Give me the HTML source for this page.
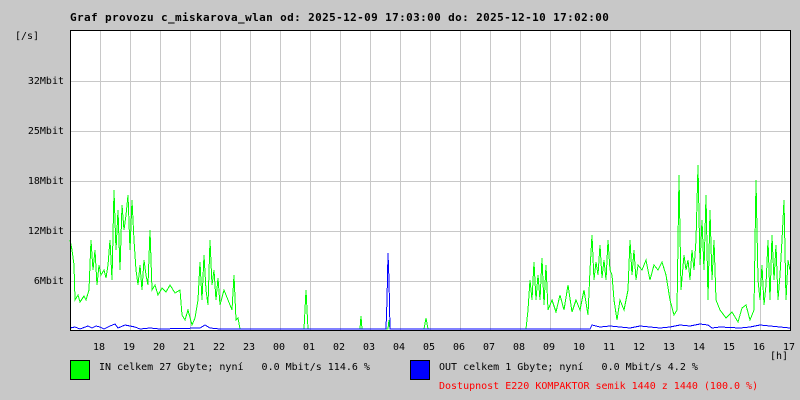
<!DOCTYPE html>
<html><head><meta charset="utf-8"><style>
body{margin:0;background:#c8c8c8;width:800px;height:400px;overflow:hidden;font-family:"DejaVu Sans Mono","Liberation Mono",monospace;font-size:10px}
.t{position:absolute;white-space:pre;color:#000;line-height:12px}
.h{position:absolute;top:342px;width:20px;text-align:center;line-height:12px}
</style></head><body>
<svg width="800" height="400" style="position:absolute;left:0;top:0" shape-rendering="crispEdges">
<rect x="70" y="30" width="720" height="300" fill="#fff"/>
<g stroke="#c8c8c8" stroke-width="1">
<path d="M100.5 30V330M130.5 30V330M160.5 30V330M190.5 30V330M220.5 30V330M250.5 30V330M280.5 30V330M310.5 30V330M340.5 30V330M370.5 30V330M400.5 30V330M430.5 30V330M460.5 30V330M490.5 30V330M520.5 30V330M550.5 30V330M580.5 30V330M610.5 30V330M640.5 30V330M670.5 30V330M700.5 30V330M730.5 30V330M760.5 30V330"/>
<path d="M70 81.5H790M70 131.5H790M70 181.5H790M70 231.5H790M70 281.5H790"/>
</g>
<polyline fill="none" stroke="#00ff00" stroke-width="1" points="70,240 72,250 74,265 75,300 78,295 80,302 84,296 86,300 89,290 91,240 93,270 95,250 97,285 99,265 101,275 104,270 106,278 108,265 110,240 112,280 114,190 116,250 118,210 120,270 122,205 124,230 126,215 128,195 130,250 132,200 134,240 136,270 138,285 140,265 142,290 144,260 146,275 148,285 150,230 152,290 155,285 158,295 162,288 166,292 170,285 175,293 180,290 182,315 185,320 188,310 192,325 195,318 198,300 200,262 202,300 204,255 206,290 208,305 210,240 212,285 214,270 216,300 218,278 220,305 224,290 228,300 232,310 234,275 236,320 238,318 240,329 304,329 306,290 308,329 360,329 361,316 362,329 388,329 389,320 390,329 424,329 426,318 428,329 526,329 528,310 530,280 532,300 534,262 536,300 538,275 540,300 542,258 544,305 546,265 548,310 552,300 556,312 560,295 564,310 568,285 572,312 576,300 580,310 584,290 588,315 590,270 592,235 594,280 596,262 598,275 600,245 602,278 604,260 606,280 608,240 610,270 612,275 614,300 617,320 620,300 624,310 628,290 630,240 632,275 634,250 636,280 638,265 642,270 646,260 650,280 654,265 658,270 662,262 666,275 670,300 674,315 677,310 679,175 681,290 684,255 686,270 688,260 690,280 692,250 694,270 696,240 698,165 700,265 702,220 704,270 706,195 708,300 710,210 712,280 714,240 716,300 720,310 726,318 732,312 738,322 742,308 746,305 750,320 754,310 756,180 758,280 760,300 762,265 764,305 766,285 768,240 770,300 772,235 774,280 776,245 778,300 780,275 782,240 784,200 786,300 788,260 790,270"/>
<polyline fill="none" stroke="#0000ff" stroke-width="1" points="70,328 75,327 80,329 88,326 92,328 96,326 100,327 104,329 110,326 115,324 118,328 125,325 130,326 135,327 140,329 150,328 160,329 200,328 205,325 210,328 220,329 386,329 387,300 388,253 389,280 390,329 590,329 592,325 596,326 600,327 610,326 620,327 630,328 640,326 650,327 660,328 670,327 680,325 690,326 700,324 708,325 712,328 720,327 740,328 750,327 760,325 770,326 780,327 790,328"/>
<path d="M70.5 30V330.5H790.5V30M70 30.5H790" fill="none" stroke="#000" stroke-width="1"/>
<rect x="70.5" y="360.5" width="19" height="19" fill="#00ff00" stroke="#000"/>
<rect x="410.5" y="360.5" width="19" height="19" fill="#0000ff" stroke="#000"/>
</svg>
<div class="t" style="left:70px;top:12px;font-weight:bold;font-size:11px;letter-spacing:0.38px">Graf provozu c_miskarova_wlan od: 2025-12-09 17:03:00 do: 2025-12-10 17:02:00</div>
<div class="t" style="left:15px;top:31px">[/s]</div>
<div class="t" style="left:14px;top:76px;width:50px;text-align:right">32Mbit</div>
<div class="t" style="left:14px;top:126px;width:50px;text-align:right">25Mbit</div>
<div class="t" style="left:14px;top:176px;width:50px;text-align:right">18Mbit</div>
<div class="t" style="left:14px;top:226px;width:50px;text-align:right">12Mbit</div>
<div class="t" style="left:14px;top:276px;width:50px;text-align:right">6Mbit</div>
<div class="h" style="left:89px">18</div><div class="h" style="left:119px">19</div><div class="h" style="left:149px">20</div><div class="h" style="left:179px">21</div><div class="h" style="left:209px">22</div><div class="h" style="left:239px">23</div><div class="h" style="left:269px">00</div><div class="h" style="left:299px">01</div><div class="h" style="left:329px">02</div><div class="h" style="left:359px">03</div><div class="h" style="left:389px">04</div><div class="h" style="left:419px">05</div><div class="h" style="left:449px">06</div><div class="h" style="left:479px">07</div><div class="h" style="left:509px">08</div><div class="h" style="left:539px">09</div><div class="h" style="left:569px">10</div><div class="h" style="left:599px">11</div><div class="h" style="left:629px">12</div><div class="h" style="left:659px">13</div><div class="h" style="left:689px">14</div><div class="h" style="left:719px">15</div><div class="h" style="left:749px">16</div><div class="h" style="left:779px">17</div>
<div class="t" style="left:770px;top:351px">[h]</div>
<div class="t" style="left:99px;top:362px">IN celkem 27 Gbyte; nyní   0.0 Mbit/s 114.6 %</div>
<div class="t" style="left:439px;top:362px">OUT celkem 1 Gbyte; nyní   0.0 Mbit/s 4.2 %</div>
<div class="t" style="left:439px;top:381px;color:#ff0000">Dostupnost E220 KOMPAKTOR semik 1440 z 1440 (100.0 %)</div>
</body></html>
